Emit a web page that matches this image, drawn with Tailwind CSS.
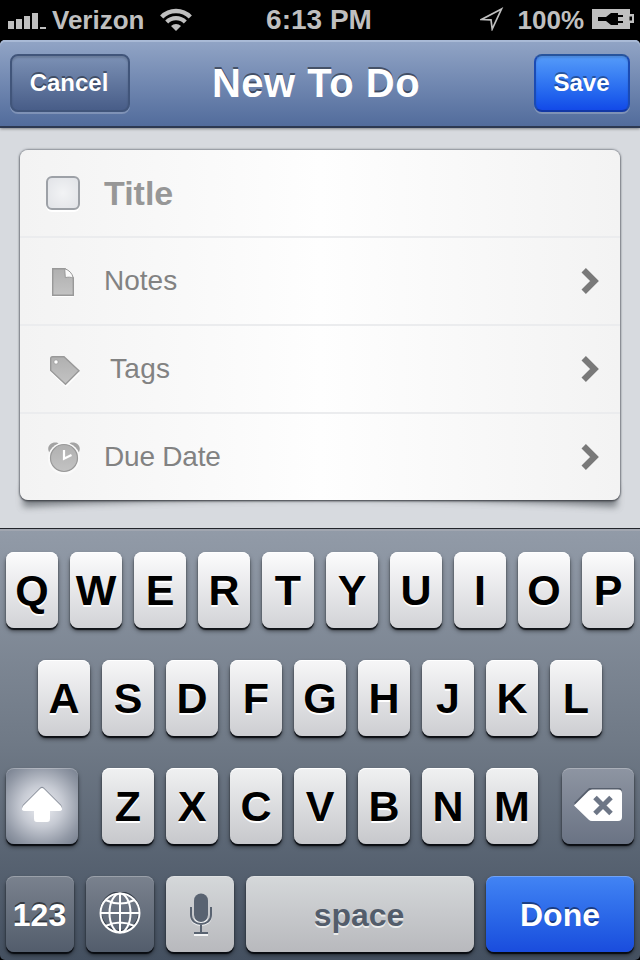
<!DOCTYPE html>
<html lang="en">
<head>
<meta charset="utf-8">
<title>New To Do</title>
<script src="https://cdn.jsdelivr.net/npm/@tailwindcss/browser@4"></script>
</head>
<body class="bg-black">
<div class="w-[640px] h-[960px] overflow-hidden flex flex-col bg-black font-['Liberation_Sans',Arial,sans-serif]">

  <!-- Status bar -->
  <header class="h-10 shrink-0 grid grid-cols-[1fr_auto_1fr] items-center font-bold text-[#bfbfbf] text-[26px] leading-10">
    <div class="flex items-center pl-2">
      <svg class="w-[38px] h-5 mr-1.5" viewBox="0 0 38 20" fill="#bfbfbf"><path d="M0 11h6v8H0zM8 9h6v10H8zM16 6h6v13h-6zM24 3h6v16h-6zM32 17h6v2h-6z"/></svg>
      <span>Verizon</span>
      <svg class="w-8 h-6 ml-4" viewBox="0 0 32 24" fill="none" stroke="#bfbfbf"><path d="M1.700 9a20 20 0 0 1 28.600 0" stroke-width="4.400"/><path d="M6.700 14a13 13 0 0 1 18.600 0" stroke-width="4.200"/><path d="M16 23l-5-5.100a7.300 7.300 0 0 1 10 0z" fill="#bfbfbf" stroke="none"/></svg>
    </div>
    <div class="text-[28px] -ml-0.5">6:13 PM</div>
    <div class="flex items-center justify-end pr-1.5">
      <svg class="w-6 h-6 mr-3.5 -mt-0.5" viewBox="0 0 24 24" fill="none" stroke="#bfbfbf" stroke-width="1.700"><path d="M21.500 2L1.500 12.500L11 12.800L12.200 22Z"/></svg>
      <span>100%</span>
      <svg class="w-[42px] h-5 ml-2 -mt-0.5" viewBox="0 0 42 20"><path d="M0 0h38v5h4v9h-4v6H0z" fill="#bfbfbf"/><path d="M37.500 7.500h2.500v4h-2.500z" fill="#000"/><path d="M6 8h8l5-4h7v2h5v2h-5v4h5v2h-5v2h-7l-5-4H6z" fill="#000"/></svg>
    </div>
  </header>

  <!-- Navigation bar -->
  <nav class="relative z-10 h-[88px] shrink-0 flex items-center justify-between px-2.5 rounded-t-[5px] border-b-2 border-[#2d3951] bg-linear-to-b from-[#92a5c6] to-[#526c9c] shadow-[inset_0_2px_0_#a9bad6,0_1px_3px_rgba(0,0,0,0.4)] text-white font-bold">
    <button class="w-[120px] h-[58px] rounded-[8px] border-2 border-[#41557a] bg-linear-to-b from-[#7c91b5] to-[#485d88] shadow-[0_2px_0_rgba(255,255,255,0.22),inset_0_2px_2px_rgba(0,0,0,0.15)] text-[24px] leading-[54px] pr-0.5 [text-shadow:0_-2px_0_rgba(0,0,0,0.4)]">Cancel</button>
    <h1 class="text-[40px] leading-[58px] tracking-[0.500px] -ml-5 pr-3 [text-shadow:0_-2px_0_rgba(0,0,0,0.45)]">New To Do</h1>
    <button class="w-24 h-[58px] rounded-[8px] border-2 border-t-[#27549c] border-x-[#1b4bb4] border-b-[#1338a5] bg-linear-to-b from-[#559bf9] to-[#1349e8] shadow-[0_2px_0_rgba(255,255,255,0.22),inset_0_2px_2px_rgba(0,0,0,0.12)] text-[24px] leading-[54px] pr-px [text-shadow:0_-2px_0_rgba(0,0,0,0.35)]">Save</button>
  </nav>

  <!-- Form -->
  <main class="relative h-[400px] shrink-0 px-5 pt-[22px] bg-[#d7dadf]">
    <svg class="absolute left-0 top-[350px] w-full h-[50px]" viewBox="0 0 640 50"><defs><filter id="soft" x="-5%" y="-100%" width="110%" height="300%"><feGaussianBlur stdDeviation="3.500"/></filter></defs><path d="M23 8H617V29Q320 12 23 29Z" fill="#5c6066" opacity=".75" filter="url(#soft)"/></svg>
    <section class="relative h-[350px] rounded-[8px] bg-linear-to-r from-[#f3f3f3] via-[#fefefe] to-[#f3f3f3] shadow-[0_0_2px_1px_rgba(80,85,95,0.55),0_1px_2px_rgba(0,0,0,0.6)] text-[28px] text-[#828282]">
      <div class="h-[88px] border-b-2 border-[#ebecee] flex items-center pl-[26px]">
        <span class="w-[34px] h-[34px] mr-6 rounded-[6px] border-[2.500px] border-[#9da1a7] bg-[radial-gradient(#f2f3f5,#e1e3e7)] shadow-[0_2px_0_#fff]"></span>
        <span class="text-[34px] font-bold text-[#979797]">Title</span>
      </div>
      <div class="h-[88px] border-b-2 border-[#ebecee] flex items-center pl-[26px] pr-5">
        <svg class="w-[34px] h-[34px] mr-6 mt-0.5" viewBox="0 0 34 34"><defs><linearGradient id="g" x2="0" y2="1"><stop stop-color="#b0b0b0"/><stop offset="1" stop-color="#c3c3c3"/></linearGradient></defs><path d="M6 5h13l8.500 9v18H6z" fill="#fff"/><path d="M6.700 3.700h12.300l8.300 9.300v17.300H6.700z" fill="url(#g)" stroke="#999" stroke-width="1.400"/><path d="M18.700 3.700c4.500 1.500 7.500 4.500 8.600 9.300-2.500-1-5.500-1-8-.4z" fill="#fafafa" stroke="#999" stroke-width="1"/></svg>
        <span class="grow">Notes</span>
        <svg class="w-5 h-7" viewBox="0 0 20 28" fill="none" stroke="#797979" stroke-width="6.200"><path d="M3.700 3.200l10.800 10.800L3.700 24.800"/></svg>
      </div>
      <div class="h-[88px] border-b-2 border-[#ebecee] flex items-center pl-[26px] pr-5">
        <svg class="w-[34px] h-[34px] mr-[30px] mt-0.5" viewBox="0 0 34 34"><path d="M5 6h13L34 20 20 34 4 19z" fill="#fff"/><path fill-rule="evenodd" d="M4.700 5.500q0-1.800 1.800-1.800H18L33 17.700 19.500 31.300 4.700 17.500z" fill="url(#g)" stroke="#999" stroke-width="1.400"/><circle cx="10" cy="9" r="2.200" fill="#fff" stroke="#999" stroke-width=".8"/></svg>
        <span class="grow tracking-[0.300px]">Tags</span>
        <svg class="w-5 h-7" viewBox="0 0 20 28" fill="none" stroke="#797979" stroke-width="6.200"><path d="M3.700 3.200l10.800 10.800L3.700 24.800"/></svg>
      </div>
      <div class="h-[86px] flex items-center pl-[26px] pr-5">
        <svg class="w-[34px] h-[34px] mr-6 mt-0.5" viewBox="0 0 34 34"><path d="M3 11C0 5 6 0 12 2L14 5 6 13zM33 11C36 5 30 0 24 2L22 5 30 13z" fill="#a3a3a3"/><circle cx="18" cy="17.500" r="16" fill="#fafafa"/><circle cx="18" cy="17" r="13.500" fill="url(#g)" stroke="#999" stroke-width="1.200"/><path d="M18 9v8.700l7.500-3.700" fill="none" stroke="#fff" stroke-width="2.200"/></svg>
        <span class="grow tracking-[-0.200px]">Due Date</span>
        <svg class="w-5 h-7" viewBox="0 0 20 28" fill="none" stroke="#797979" stroke-width="6.200"><path d="M3.700 3.200l10.800 10.800L3.700 24.800"/></svg>
      </div>
    </section>
  </main>

  <!-- Keyboard -->
  <section class="relative h-[432px] shrink-0 flex flex-col gap-8 px-1.5 pt-[23px] rounded-b-[5px] border-t border-[#23252c] bg-linear-to-b from-[#929ba8] via-[#6f7986] via-50% to-[#445060] shadow-[inset_0_2px_0_#a1a6b0] text-[43px] leading-[76px] font-bold text-black text-center">
    <div class="flex gap-3 h-[76px] shrink-0 [&>span]:w-[52px] [&>span]:rounded-[8px] [&>span]:bg-linear-to-b [&>span]:from-[#fcfcfd] [&>span]:to-[#d2d3d7] [&>span]:shadow-[0_2px_1px_#111419,0_3px_4px_rgba(0,0,0,0.5),inset_0_1px_0_#fff] [&>span]:[text-shadow:0_2px_0_#fff]">
      <span>Q</span><span>W</span><span>E</span><span>R</span><span>T</span><span>Y</span><span>U</span><span>I</span><span>O</span><span>P</span>
    </div>
    <div class="flex gap-3 px-8 h-[76px] shrink-0 [&>span]:w-[52px] [&>span]:rounded-[8px] [&>span]:bg-linear-to-b [&>span]:from-[#f7f7f8] [&>span]:to-[#cdced2] [&>span]:shadow-[0_2px_1px_#0c0f14,0_3px_4px_rgba(0,0,0,0.5),inset_0_1px_0_#fff] [&>span]:[text-shadow:0_2px_0_#fff]">
      <span>A</span><span>S</span><span>D</span><span>F</span><span>G</span><span>H</span><span>J</span><span>K</span><span>L</span>
    </div>
    <div class="flex justify-between h-[76px] shrink-0">
      <div class="w-[72px] rounded-[8px] flex items-center justify-center bg-[radial-gradient(circle,#f0f1f5_0%,#c6cad3_40%,#9299a6_75%,#747d8c_100%)] shadow-[0_2px_1px_#0a0d12,0_3px_4px_rgba(0,0,0,0.5),inset_0_1px_0_rgba(255,255,255,0.25)]">
        <svg class="w-11 h-10" viewBox="0 0 44 40"><path d="M20 3q2-2 4 0L41 20q3 5-2 5H30v8q0 3-3 3H17q-3 0-3-3V25H5q-5 0-2-5z" fill="#8b919c" transform="translate(0 -1.200)"/><path d="M20 3q2-2 4 0L41 20q3 5-2 5H30v8q0 3-3 3H17q-3 0-3-3V25H5q-5 0-2-5z" fill="#fff"/></svg>
      </div>
      <div class="flex gap-3 [&>span]:w-[52px] [&>span]:rounded-[8px] [&>span]:bg-linear-to-b [&>span]:from-[#f0f1f2] [&>span]:to-[#c7c8cc] [&>span]:shadow-[0_2px_1px_#0a0d12,0_3px_4px_rgba(0,0,0,0.5),inset_0_1px_0_#fff] [&>span]:[text-shadow:0_2px_0_#fff]">
        <span>Z</span><span>X</span><span>C</span><span>V</span><span>B</span><span>N</span><span>M</span>
      </div>
      <div class="w-[72px] rounded-[8px] flex items-center justify-center bg-linear-to-b from-[#8e95a2] to-[#6a7384] shadow-[0_2px_1px_#0a0d12,0_3px_4px_rgba(0,0,0,0.5),inset_0_1px_0_rgba(255,255,255,0.25)]">
        <svg class="w-12 h-9" viewBox="0 0 48 36"><path d="M0 15L14 1q1.500-1.500 3-1.500H44q4 0 4 4V27H14z" fill="#565e6c"/><path d="M0 17.500L14.500 3q1.500-1.500 3.500-1.500H44q4 0 4 4V29q0 4-4 4H18q-2 0-3.500-1.500z" fill="#fff"/><path d="M21 9.500L37 25.500M37 9.500L21 25.500" stroke="#6d7686" stroke-width="5"/></svg>
      </div>
    </div>
    <div class="flex gap-3 h-[76px] shrink-0 text-[32px] leading-[78px] [&>div]:rounded-[8px] [&>div]:shadow-[0_2px_1px_#080b10,0_3px_4px_rgba(0,0,0,0.5),inset_0_1px_0_rgba(255,255,255,0.25)]">
      <div class="w-[68px] pr-px bg-linear-to-b from-[#7a828e] to-[#535d6c] text-white [text-shadow:0_-2px_0_rgba(0,0,0,0.5)]">123</div>
      <div class="w-[68px] flex items-center justify-center bg-linear-to-b from-[#7a828e] to-[#535d6c]">
        <svg class="w-11 h-11" viewBox="0 0 44 44" fill="none"><circle cx="22" cy="19.500" r="19.300" stroke="#353d49" stroke-width="2"/><g stroke="#fff" stroke-width="2"><circle cx="22" cy="21" r="19.500"/><ellipse cx="22" cy="21" rx="10.500" ry="19.500"/><path d="M22 1.500v39M2.500 21h39M7.500 8q14.500 7 29 0M7.500 34q14.500-7 29 0"/></g></svg>
      </div>
      <div class="w-[68px] flex items-center justify-center bg-linear-to-b from-[#d5d8da] to-[#b8b9bd]">
        <svg class="w-6 h-11 ml-0.5" viewBox="0 0 24 44" fill="none"><path d="M2 18v6c0 12 20 12 20 0v-6M5 43h14" stroke="#f4f5f6" stroke-width="2"/><rect x="5" y="3" width="14" height="29" rx="7" fill="#f4f5f6"/><rect x="5" y="1.500" width="14" height="28.500" rx="7" fill="#596371"/><path d="M2 15v8c0 12 20 12 20 0v-8M12 32v8M5 41h14" stroke="#596371" stroke-width="2"/></svg>
      </div>
      <div class="w-[228px] pr-0.5 bg-linear-to-b from-[#d5d8da] to-[#b8b9bd] text-[#535d6b] [text-shadow:0_2px_0_#eceded]">space</div>
      <div class="w-[148px] bg-linear-to-b from-[#4284f4] to-[#1a4cdd] text-white [text-shadow:0_-2px_0_rgba(0,0,0,0.45)]">Done</div>
    </div>
  </section>
</div>
</body>
</html>
